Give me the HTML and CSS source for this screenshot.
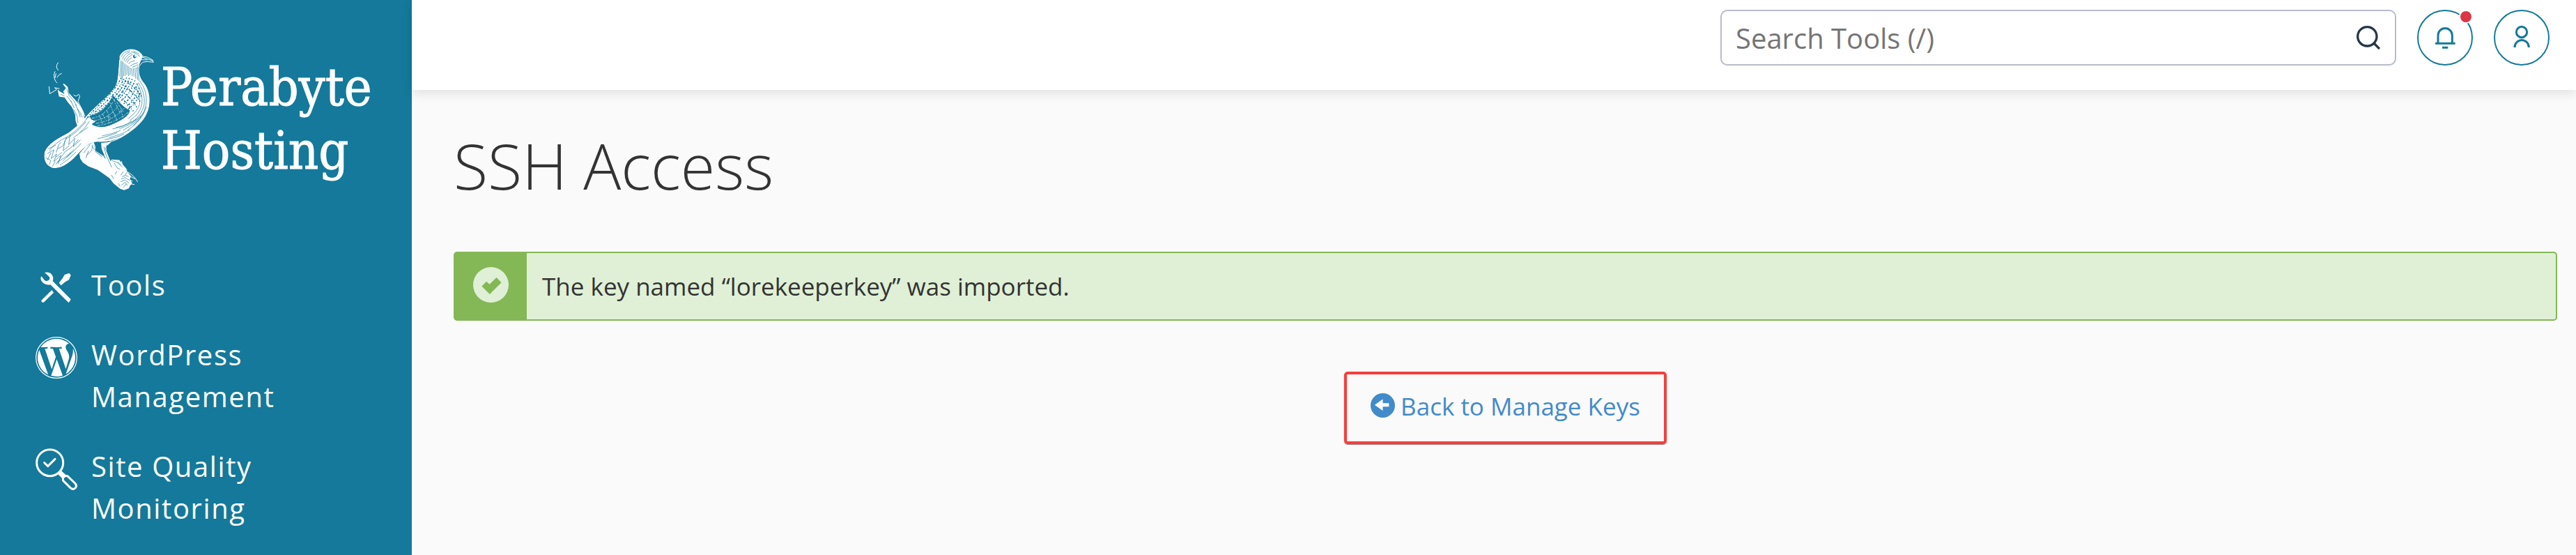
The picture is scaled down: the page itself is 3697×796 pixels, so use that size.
FILE: index.html
```html
<!DOCTYPE html>
<html lang="en">
<head>
<meta charset="utf-8">
<title>SSH Access</title>
<link rel="stylesheet" href="styles.css">
</head>
<body>
<div class="app">
  <aside class="sidebar">
    <div class="brand">
      <svg class="brand-bird" viewBox="60 60 490 620" aria-hidden="true">
        <defs>
          <clipPath id="body"><path d="M396 98C400 76 422 63 446 63C470 63 490 76 495 95L478 135C474 160 482 185 496 203C520 230 528 270 521 310C512 360 475 395 430 425C395 450 350 465 300 462C265 460 240 490 215 515C180 555 140 580 105 574C75 565 65 535 72 505C85 470 130 445 175 422C205 400 225 380 248 355C290 305 350 265 378 220C392 195 390 130 396 98Z"/></clipPath>
        </defs>
        <g class="ink">
          <path d="M222 512L250 480L285 462L290 505L325 525L352 548L362 538L395 540L410 560L424 576L428 590L445 610L440 622L450 640L440 652L436 662L415 670L398 664L370 642L352 618L318 594L300 582L262 568L238 552L226 535Z"/>
          <path d="M128 236L134 266L158 270L172 290L190 312L204 345L206 372L216 400L244 362L240 335L228 312L214 292L192 268L176 250L172 225L158 212L150 211L164 230L152 244L158 256L140 246Z"/>
          <path d="M316 466L360 462L340 480L338 500L352 535L374 590L368 590L340 545L328 515L318 492Z"/>
        </g>
        <g class="line">
          <path d="M131 119Q116 137 131 153M117 157Q107 176 119 200L127 208M125 184Q132 170 146 166M121 166L117 186M91 222L94 254L124 236L115 228L136 232M197 259Q210 270 218 256M218 256L224 264L216 288L238 330L246 352M424 588Q458 605 474 635M404 545L410 572L428 582M436 608L464 622M438 625L452 632M436 642L460 646"/>
        </g>
        <g class="cut">
          <path d="M240 510L268 474M252 520L275 500L280 474M262 500L250 532M275 478L292 502L320 528M362 542L388 552L408 572M372 552L386 575L398 580M386 548L402 562M140 256L158 264M168 234L178 262L196 282L210 305M168 264L188 290M184 282L200 316M205 300L218 330L226 356M196 320L212 350L216 380M212 318L230 342M226 342L236 356M328 482L338 520L362 572M342 474L332 498M406 612L422 606L434 612M402 622L420 616L440 628M400 634L420 626L436 640M404 648L420 636L430 650M390 640L398 654M384 588L376 602M360 604L370 622M412 658L424 644M412 590L400 606M428 592L420 604"/>
        </g>
        <g clip-path="url(#body)">
          <path class="ink" d="M396 98C400 76 422 63 446 63C470 63 490 76 495 95L478 135C474 160 482 185 496 203C520 230 528 270 521 310C512 360 475 395 430 425C395 450 350 465 300 462C265 460 240 490 215 515C180 555 140 580 105 574C75 565 65 535 72 505C85 470 130 445 175 422C205 400 225 380 248 355C290 305 350 265 378 220C392 195 390 130 396 98Z"/>
          <path class="shade" d="M268 348C310 340 345 310 366 260C390 280 405 310 440 325C440 350 395 375 350 392C320 402 290 398 275 385L292 374L272 364Z"/>
          <g class="cut">
            <path d="M403 95Q412 73 440 68M408 106Q414 82 440 74M414 112Q422 88 448 78M420 116Q430 94 452 84M428 120Q432 104 448 98M434 126Q444 112 462 112M442 134Q456 124 474 120M450 140Q464 134 476 128M456 72Q472 74 480 84M446 72Q470 78 484 94M402 110L396 180M407 112L402 190M412 118L406 200M418 124L413 178M424 128L420 176M430 132L427 172M436 136L434 178M442 142L441 174M448 144L450 178M455 144L458 180M462 142L466 190M469 140L474 194M474 136L480 200"/>
            <path d="M484 200Q518 245 510 300Q502 350 455 390M476 206Q508 250 502 300Q494 345 448 380M470 212Q498 250 492 300Q484 340 440 370M464 222Q486 255 482 300Q474 330 432 362M512 310Q492 372 430 412M500 335Q470 380 410 412M488 348Q455 385 395 405M470 360Q435 390 380 400M448 372Q415 396 365 406M440 410Q400 432 350 444M415 428Q380 446 330 452M400 412Q365 428 320 436M385 422Q355 436 300 448"/>
            <path d="M262 352Q225 405 170 440Q120 462 92 500M250 375Q215 420 160 452M266 372Q250 402 222 422M260 398Q222 425 196 444M182 430L176 474L202 446L196 482L228 452M168 440L150 480L128 492M160 455L152 500L178 478M142 462L132 476L122 508M218 452Q190 488 160 504L120 560M230 468Q195 505 168 528M208 505Q175 540 138 562M198 496Q160 532 126 550M84 512L112 496L100 534L124 514L112 546L142 520L130 558M78 530L98 542L92 560M100 508L84 540M148 506L120 528M186 508L150 545M88 492L120 476M105 568L118 546"/>
          </g>
          <g class="fleck cut">
            <path d="M402 186Q382 230 330 280T250 365"/><path d="M414 190Q394 236 340 286T262 360"/><path d="M426 184Q406 242 350 292T272 354"/><path d="M438 186Q418 246 370 286T300 346"/><path d="M450 190Q428 250 385 280"/><path d="M462 196Q442 256 396 290"/><path d="M472 210Q456 266 410 300"/><path d="M480 228Q466 280 424 310"/><path d="M484 250Q470 296 430 322"/><path d="M408 214Q450 240 486 290"/><path d="M396 236Q436 262 470 312"/><path d="M380 254Q420 284 456 330"/><path d="M420 200Q462 222 492 270"/>
          </g>
          <g class="feather">
            <path d="M276 360Q330 352 366 290M286 370Q350 362 392 304M294 382Q370 370 416 316M300 392Q380 380 438 330M322 340L334 366M340 326L356 360M356 304L374 348M370 278L396 334M384 290L412 332M310 352L322 384M346 350L350 382M374 340L384 370M400 324L412 356M358 268L380 286M348 290L364 300"/>
          </g>
        </g>
        <path class="line" d="M396 98C400 76 422 63 446 63C470 63 490 76 495 93L515 96L538 108L542 118L515 115L495 118L480 135C474 160 482 185 496 203C520 230 528 270 521 310C512 360 475 395 430 425C405 442 380 456 350 462M492 96L515 104L540 112M490 107L516 108M280 460L290 482L288 500L330 526"/>
        <circle class="eye" cx="461" cy="93" r="9"/>
        <circle class="ink" cx="464" cy="91" r="4"/>
      </svg>
      <div class="brand-name">Perabyte<br>Hosting</div>
    </div>
    <nav class="nav" aria-label="Main">
      <a class="nav-item" href="#tools">
        <svg class="nav-icon" viewBox="0 0 180 180" aria-hidden="true">
          <path class="ink" d="M39 24C56 18 75 29 76 48L74 61L152 139Q149 149 142 153L64 76C43 80 21 66 22 45L26 40L38 56Q48 64 59 55Q65 46 54 37Z"/>
          <path class="ink" d="M117 47L125 33L145 26L152 35L144 55L128 64L110 79L101 68Z"/>
          <path class="ink" d="M70 99L78 110L35 152Q25 154 25 143Z"/>
        </svg>
        <span>Tools</span>
      </a>
      <a class="nav-item" href="#wordpress">
        <svg class="nav-icon" viewBox="0 0 24 24" aria-hidden="true">
          <circle class="wp-ring" cx="12" cy="12" r="11.72"/>
          <path class="ink" d="M21.469 6.825c.84 1.537 1.318 3.3 1.318 5.175 0 3.979-2.156 7.456-5.363 9.325l3.295-9.527c.615-1.54.82-2.771.82-3.864 0-.405-.026-.78-.07-1.11m-7.981.105c.647-.03 1.232-.105 1.232-.105.582-.075.514-.93-.067-.899 0 0-1.755.135-2.88.135-1.064 0-2.85-.15-2.85-.15-.585-.03-.661.855-.075.885 0 0 .54.061 1.125.09l1.68 4.605-2.37 7.08L5.354 6.9c.649-.03 1.234-.1 1.234-.1.585-.075.516-.93-.065-.896 0 0-1.746.138-2.874.138-.2 0-.438-.008-.69-.015C4.911 3.15 8.235 1.215 12 1.215c2.809 0 5.365 1.072 7.286 2.833-.046-.003-.091-.009-.141-.009-1.06 0-1.812.923-1.812 1.914 0 .89.513 1.643 1.06 2.531.411.72.89 1.643.89 2.977 0 .915-.354 1.994-.821 3.479l-1.075 3.585-3.9-11.61zM12 22.784c-1.059 0-2.081-.153-3.048-.437l3.237-9.406 3.315 9.087c.024.053.05.101.078.149-1.12.393-2.325.609-3.582.609M1.211 12c0-1.564.336-3.05.935-4.39L7.29 21.709C3.694 19.96 1.212 16.271 1.211 12"/>
        </svg>
        <span>WordPress Management</span>
      </a>
      <a class="nav-item" href="#quality">
        <svg class="nav-icon" viewBox="0 0 180 180" aria-hidden="true">
          <g class="glass">
            <circle cx="62" cy="62" r="57"/>
            <path d="M38 62L53 77L84 46"/>
            <path d="M99 107L119 127M107 99L128 118M103 103L123 122"/>
            <path d="M119 125Q125 117 137 119L170 150Q180 162 171 171Q161 180 150 170L119 139Q117 132 119 125Z"/>
          </g>
        </svg>
        <span>Site Quality Monitoring</span>
      </a>
    </nav>
  </aside>
  <div class="content">
    <header class="topbar">
      <form class="search" role="search">
        <input class="search-input" type="text" aria-label="Search Tools" placeholder="Search Tools (/)">
        <button class="search-button" type="button" aria-label="Search">
          <svg class="search-icon" viewBox="0 0 102 102" aria-hidden="true"><circle cx="46" cy="46" r="41"/><path d="M75 75L99 99"/></svg>
        </button>
      </form>
      <button class="round-button" type="button" aria-label="Notifications">
        <svg class="round-icon" viewBox="0 0 120 120" aria-hidden="true"><path d="M30 85V50A30 30 0 0 1 91 50V85M18 85H104M48 103H73"/></svg>
        <span class="badge"></span>
      </button>
      <button class="round-button" type="button" aria-label="Account">
        <svg class="round-icon" viewBox="0 0 120 120" aria-hidden="true"><circle cx="60" cy="36" r="23"/><path d="M30 102A30 31 0 0 1 91 102"/></svg>
      </button>
    </header>
    <main class="main">
      <h1 class="title">SSH Access</h1>
      <div class="alert" role="status">
        <div class="alert-mark">
          <svg class="alert-icon" viewBox="0 0 152 152" aria-hidden="true"><circle cx="76" cy="76" r="76"/><path d="M37 82L57 62L70 74L100 45L121 66L71 116Z"/></svg>
        </div>
        <p class="alert-text">The key named “lorekeeperkey” was imported.</p>
      </div>
      <div class="back-row">
        <a class="back" href="#keys">
          <svg class="back-icon" viewBox="0 0 106 106" aria-hidden="true"><circle cx="53" cy="53" r="53"/><path d="M18 51L53 26V43H80V58H53V76Z"/></svg>
          <span>Back to Manage Keys</span>
        </a>
      </div>
    </main>
  </div>
</div>
</body>
</html>
```

FILE: styles.css
```css
* { box-sizing: border-box; }

body {
  margin: 0;
  background: #fafafa;
  color: #333;
  font-family: "Open Sans", "Noto Sans", sans-serif;
  font-size: 35px;
}

.app { display: flex; min-height: 100vh; }

.sidebar {
  flex: 0 0 591px;
  background: #14799b;
  color: #fff;
}

.brand {
  display: flex;
  gap: 8px;
  padding: 70px 0 0 60px;
}
.brand-bird { flex: none; width: 163px; height: 206px; }
.brand-name {
  padding-top: 10px;
  font-family: "DejaVu Serif Condensed", "DejaVu Serif", serif;
  font-size: 75px;
  line-height: 91px;
  -webkit-text-stroke: 1px #fff;
}

.ink { fill: #fff; }
.line, .cut, .feather, .eye { fill: none; stroke-width: 3; }
.line { stroke: #fff; }
.cut { stroke: #14799b; stroke-width: 2; }
.fleck { stroke-width: 5; stroke-dasharray: 5 7 8 5 3 6; }
.shade { fill: #14799b; }
.feather { stroke: #fff; stroke-width: 2; stroke-dasharray: 12 5 6 4; }
.eye { fill: #14799b; stroke: #fff; }

.nav {
  display: flex;
  flex-direction: column;
  gap: 40px;
  padding: 103px 100px 40px 51px;
}
.nav-item {
  display: flex;
  align-items: flex-start;
  gap: 20px;
  color: #fff;
  font-size: 40px;
  line-height: 60px;
  letter-spacing: .04em;
  text-decoration: none;
}
.nav-icon { flex: none; width: 60px; height: 60px; margin: 4px 0 -4px; }
.wp-ring { fill: none; stroke: #fff; stroke-width: .5; }
.glass { fill: none; stroke: #fff; stroke-width: 9; stroke-linecap: round; stroke-linejoin: round; }

.content { flex: 1; min-width: 0; }

.topbar {
  display: flex;
  justify-content: flex-end;
  gap: 30px;
  height: 129px;
  padding: 14px 38px 0;
  background: #fff;
  box-shadow: 0 5px 15px rgba(0, 0, 0, .1);
}

.search {
  display: flex;
  align-items: center;
  width: 970px;
  height: 80px;
  border: 2px solid #b9bbcb;
  border-radius: 10px;
}
.search-input {
  flex: 1;
  min-width: 0;
  height: 100%;
  padding: 0 20px;
  border: 0;
  outline: 0;
  background: transparent;
  color: #333;
  font: inherit;
  font-size: 40px;
}
.search-input::placeholder { color: #757575; opacity: 1; }
.search-button {
  display: flex;
  padding: 0 21px;
  border: 0;
  background: none;
}
.search-icon { width: 34px; height: 34px; fill: none; stroke: #253746; stroke-width: 10; }

.round-button {
  position: relative;
  display: flex;
  align-items: center;
  justify-content: center;
  width: 80px;
  height: 80px;
  padding: 0;
  border: 2px solid #14799b;
  border-radius: 50%;
  background: #fff;
}
.round-icon { width: 40px; height: 40px; fill: none; stroke: #14799b; stroke-width: 9; }
.badge {
  position: absolute;
  top: -2px;
  right: -2px;
  width: 20px;
  height: 20px;
  border: 2px solid #fff;
  border-radius: 50%;
  background: #dc3545;
}

.main { padding: 58px 27px 0 60px; }

.title {
  margin: 0 0 74px;
  font-size: 90px;
  font-weight: 300;
  line-height: 100px;
}

.alert {
  display: flex;
  border: 2px solid #84b756;
  border-radius: 5px;
  background: #dff0d6;
}
.alert-mark {
  display: flex;
  align-items: center;
  justify-content: center;
  flex: none;
  width: 103px;
  padding-bottom: 4px;
  background: #84b756;
}
.alert-icon { width: 51px; height: 51px; }
.alert-icon circle { fill: #dff0d6; }
.alert-icon path { fill: #84b756; }
.alert-text { margin: 0; padding: 24px 22px 23px; line-height: 48px; }

.back-row { display: flex; justify-content: center; padding-top: 73px; }
.back {
  display: flex;
  gap: 8px;
  padding: 22px 34px 26px;
  border: 4px solid #f63e3b;
  border-radius: 5px;
  box-shadow: 0 1px 1px #888;
  color: #428bca;
  line-height: 48px;
  text-decoration: none;
}
.back-icon { width: 35px; height: 35px; margin-top: 5px; }
.back-icon circle { fill: #428bca; }
.back-icon path { fill: #fff; }
```
